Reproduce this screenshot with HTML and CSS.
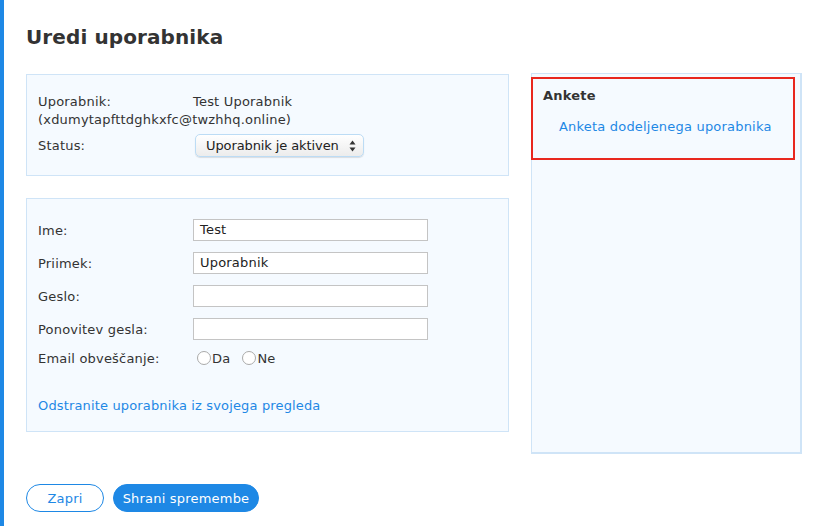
FILE: index.html
```html
<!DOCTYPE html>
<html lang="sl">
<head>
<meta charset="utf-8">
<title>Uredi uporabnika</title>
<link rel="stylesheet" href="styles.css">
</head>
<body>
<div class="page">
  <h1 class="title">Uredi uporabnika</h1>
  <div class="columns">
    <div class="main">
      <div class="box box-info">
        <div class="row-user"><span class="label">Uporabnik:</span><span>Test Uporabnik</span></div>
        <div class="email">(xdumytapfttdghkxfc@twzhhq.online)</div>
        <div class="row-status">
          <span class="label">Status:</span>
          <span class="select"><span>Uporabnik je aktiven</span><svg class="arrows" width="7" height="12" viewBox="0 0 7 12"><path d="M3.5 0.5 L6.5 4.5 H0.5 Z" fill="#333"/><path d="M3.5 11.5 L6.5 7.5 H0.5 Z" fill="#333"/></svg></span>
        </div>
      </div>
      <div class="box box-form">
        <div class="frow"><span class="label">Ime:</span><span class="input">Test</span></div>
        <div class="frow"><span class="label">Priimek:</span><span class="input">Uporabnik</span></div>
        <div class="frow"><span class="label">Geslo:</span><span class="input"></span></div>
        <div class="frow"><span class="label">Ponovitev gesla:</span><span class="input"></span></div>
        <div class="frow radios"><span class="label">Email obveščanje:</span><span class="radio"></span><span class="rlabel">Da</span><span class="radio"></span><span class="rlabel">Ne</span></div>
        <a class="link remove" href="#">Odstranite uporabnika iz svojega pregleda</a>
      </div>
    </div>
    <div class="side">
      <div class="highlight">
        <div class="side-title">Ankete</div>
        <a class="link" href="#">Anketa dodeljenega uporabnika</a>
      </div>
    </div>
  </div>
  <div class="buttons">
    <button class="btn btn-outline">Zapri</button>
    <button class="btn btn-fill">Shrani spremembe</button>
  </div>
</div>
</body>
</html>
```
FILE: styles.css
```css
html, body {
  margin: 0;
  padding: 0;
  background: #fff;
}
body {
  font-family: "DejaVu Sans", "Open Sans", sans-serif;
  font-size: 13px;
  letter-spacing: 0.2px;
  color: #333;
  border-left: 4px solid #1e88e5;
  min-height: 526px;
  box-sizing: border-box;
}
.page {
  padding: 24px 14px 0 22px;
}
.title {
  margin: 0;
  font-size: 20px;
  font-weight: bold;
  line-height: 26px;
  color: #333;
  letter-spacing: 0.1px;
}
.columns {
  display: flex;
  gap: 22px;
  margin-top: 23px;
  align-items: flex-start;
}
.main {
  width: 483px;
  display: flex;
  flex-direction: column;
  gap: 22px;
  margin-top: 1px;
}
.box {
  background: #f5faff;
  border: 1px solid #cfe4f7;
  box-sizing: border-box;
  padding: 0 11px;
}
.box-info {
  height: 102px;
  padding-top: 18px;
  line-height: 18px;
}
.label {
  display: inline-block;
  width: 155px;
  flex: none;
}
.email {
  margin-bottom: 5px;
}
.row-status {
  display: flex;
  align-items: center;
}
.select {
  margin-left: 2px;
  width: 169px;
  height: 23px;
  box-sizing: border-box;
  border: 1px solid #bcdcf5;
  border-radius: 5px;
  background: linear-gradient(#ffffff, #ececec);
  box-shadow: 0 1px 1px rgba(0,0,0,0.12);
  display: flex;
  align-items: center;
  justify-content: space-between;
  padding: 0 7px 0 10px;
  color: #222;
  letter-spacing: -0.1px;
}
.box-form {
  height: 234px;
  padding-top: 20px;
}
.frow {
  display: flex;
  align-items: center;
  height: 22px;
  margin-bottom: 11px;
}
.input {
  width: 235px;
  height: 22px;
  box-sizing: border-box;
  border: 1px solid #c4c4c4;
  background: #fff;
  padding: 0 6px;
  line-height: 20px;
  color: #222;
}
.radios {
  margin-bottom: 0;
  margin-top: -4px;
}
.radio {
  width: 14px;
  height: 14px;
  box-sizing: border-box;
  border: 1px solid #aaa;
  border-radius: 50%;
  background: #fff;
  margin-left: 4px;
}
.rlabel {
  margin-left: 1px;
  margin-right: 8px;
}
.link {
  color: #1e88e5;
  text-decoration: none;
}
.remove {
  display: block;
  margin-top: 29px;
  letter-spacing: 0.15px;
}
.side {
  width: 271px;
  height: 381px;
  box-sizing: border-box;
  background: #f5faff;
  border: 1px solid #cfe4f7;
  border-width: 1px 2px 2px 1px;
}
.highlight {
  margin: 3px 5px 0 -1px;
  height: 83px;
  box-sizing: border-box;
  border: 2px solid #e8271e;
  padding: 8px 0 0 10px;
}
.side-title {
  font-weight: bold;
  line-height: 18px;
}
.highlight .link {
  display: block;
  margin-top: 13px;
  margin-left: 16px;
  line-height: 18px;
}
.buttons {
  display: flex;
  gap: 9px;
  margin-top: 30px;
}
.btn {
  font-family: "DejaVu Sans", "Open Sans", sans-serif;
  font-size: 13px;
  letter-spacing: 0.2px;
  height: 28px;
  border-radius: 14px;
  border: 1px solid #1e88e5;
  padding: 0;
  cursor: pointer;
}
.btn-outline {
  width: 78px;
  background: #fff;
  color: #1e88e5;
}
.btn-fill {
  width: 146px;
  background: #1e88e5;
  color: #fff;
}
```
